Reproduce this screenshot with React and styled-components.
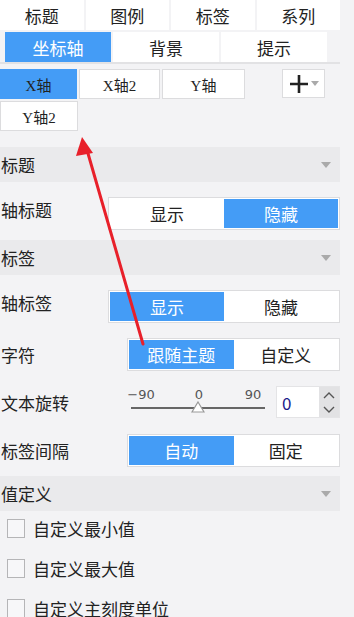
import React from 'react'
import styled, { createGlobalStyle } from 'styled-components'

const GlobalStyle = createGlobalStyle`
  html, body {
    margin: 0;
    padding: 0;
    background: #f3f3f5;
  }
  body {
    font-family: "Noto Sans CJK SC", "Noto Sans", sans-serif;
    color: #222;
  }
`

const BLUE = '#449cf6'

const Page = styled.div`
  position: relative;
  width: 354px;
  height: 617px;
  overflow: hidden;
  background: #f3f3f5;
`

const Panel = styled.div`
  width: 340px;
  display: flex;
  flex-direction: column;
`

const TabRow = styled.div`
  display: grid;
  grid-template-columns: repeat(4, 1fr);
  gap: 2px;
  height: 30px;
`

const SubTabRow = styled.div`
  display: grid;
  grid-template-columns: 106px 106px 106px;
  gap: 2px;
  height: 30px;
  margin-top: 2px;
  padding-left: 5px;
  border-bottom: 2px solid #e2e2e4;
`

const Tab = styled.div`
  display: flex;
  align-items: center;
  justify-content: center;
  font-size: 17px;
  background: ${p => (p.$active ? BLUE : '#fff')};
  color: ${p => (p.$active ? '#fff' : '#222')};
`

const AxisArea = styled.div`
  display: flex;
  align-items: flex-start;
  margin-top: 5px;
`

const AxisList = styled.div`
  display: flex;
  flex-wrap: wrap;
  width: 250px;
  column-gap: 2px;
  row-gap: 2px;
`

const AxisButton = styled.div`
  box-sizing: border-box;
  width: ${p => p.$w}px;
  height: 30px;
  display: flex;
  align-items: center;
  justify-content: center;
  font-size: 15px;
  font-family: "Liberation Serif", "Noto Sans CJK SC", serif;
  background: ${p => (p.$active ? BLUE : '#fff')};
  border: 1px solid ${p => (p.$active ? BLUE : '#dcdcde')};
  color: #222;
`

const AddButton = styled.div`
  box-sizing: border-box;
  width: 43px;
  height: 29px;
  margin-left: 32px;
  display: flex;
  align-items: center;
  justify-content: center;
  gap: 2px;
  background: #fff;
  border: 1px solid #dcdcde;
`

const SectionHeader = styled.div`
  height: 35px;
  display: flex;
  align-items: center;
  justify-content: space-between;
  padding: 0 9px 0 1px;
  margin-top: ${p => p.$top || 0}px;
  background: #eaeaec;
  font-size: 17px;
`

const Caret = styled.span`
  width: 0;
  height: 0;
  border-left: 5px solid transparent;
  border-right: 5px solid transparent;
  border-top: 6px solid #aaa;
`

const SectionBody = styled.div`
  display: flex;
  flex-direction: column;
  gap: 16px;
  padding: ${p => p.$pad || '15px 0 10px'};
`

const Row = styled.div`
  display: flex;
  align-items: center;
  height: ${p => p.$h || 32}px;
`

const Label = styled.div`
  font-size: 17px;
  padding-left: 1px;
  margin-top: ${p => p.$lift ? -8 : 0}px;
  white-space: nowrap;
`

const Segmented = styled.div`
  box-sizing: border-box;
  margin-left: auto;
  width: ${p => p.$w}px;
  height: 33px;
  display: flex;
  padding: 1px;
  background: #fff;
  border: 1px solid #dcdcde;
`

const Segment = styled.div`
  flex: 1;
  display: flex;
  align-items: center;
  justify-content: center;
  font-size: 17px;
  background: ${p => (p.$active ? BLUE : '#fff')};
  color: ${p => (p.$active ? '#fff' : '#222')};
`

const SliderBox = styled.div`
  position: relative;
  margin-left: auto;
  width: 140px;
  height: 32px;
`

const Scale = styled.div`
  display: flex;
  font-size: 13px;
  color: #555;
  font-family: "DejaVu Sans", "Noto Sans", sans-serif;
  line-height: 14px;
  padding-top: 2px;
`

const Tick = styled.span`
  width: ${p => p.$w}px;
  text-align: ${p => p.$align || 'center'};
`

const Track = styled.div`
  position: absolute;
  left: 4px;
  right: 2px;
  top: 21px;
  height: 1.5px;
  background: #666;
`

const Thumb = styled.svg`
  position: absolute;
  left: 64px;
  top: 15px;
`

const NumberBox = styled.div`
  box-sizing: border-box;
  margin-left: 9px;
  width: 64px;
  height: 32px;
  display: flex;
  background: #fff;
  border: 1px solid #e4e4e6;
`

const NumberValue = styled.div`
  flex: 1;
  display: flex;
  align-items: center;
  padding-left: 5px;
  font-size: 17px;
  color: #1a1a8a;
`

const Stepper = styled.div`
  width: 20px;
  display: flex;
  flex-direction: column;
  align-items: center;
  justify-content: space-around;
  background: #e2e2e4;
`

const CheckList = styled.div`
  display: flex;
  flex-direction: column;
  gap: 21px;
  padding: 8px 0 0 7px;
`

const CheckRow = styled.label`
  display: flex;
  align-items: center;
  gap: 8px;
  height: 19px;
  font-size: 17px;
`

const Box = styled.span`
  box-sizing: border-box;
  width: 18px;
  height: 19px;
  border: 1.5px solid #b5b5b7;
  background: #f7f7f9;
`

const Overlay = styled.svg`
  position: absolute;
  left: 0;
  top: 0;
  pointer-events: none;
`

const Chevron = ({ up }) => (
  <svg width="12" height="8" viewBox="0 0 12 8">
    <path d={up ? 'M1 7 L6 2 L11 7' : 'M1 1 L6 6 L11 1'} fill="none" stroke="#555" strokeWidth="1.4" />
  </svg>
)

const Seg = ({ w, items, active }) => (
  <Segmented $w={w}>
    {items.map((t, i) => (
      <Segment key={t} $active={i === active}>{t}</Segment>
    ))}
  </Segmented>
)

const axes = [
  { t: 'X轴', w: 77, active: true },
  { t: 'X轴2', w: 81 },
  { t: 'Y轴', w: 83 },
  { t: 'Y轴2', w: 78 },
]

export default function App() {
  return (
    <Page>
      <GlobalStyle />
      <Panel>
        <TabRow>
          {['标题', '图例', '标签', '系列'].map(t => <Tab key={t}>{t}</Tab>)}
        </TabRow>
        <SubTabRow>
          <Tab $active>坐标轴</Tab>
          <Tab>背景</Tab>
          <Tab>提示</Tab>
        </SubTabRow>

        <AxisArea>
          <AxisList>
            {axes.map(a => (
              <AxisButton key={a.t} $w={a.w} $active={a.active}>{a.t}</AxisButton>
            ))}
          </AxisList>
          <AddButton>
            <svg width="20" height="20" viewBox="0 0 20 20">
              <path d="M10 1 V19 M1 10 H19" stroke="#222" strokeWidth="2.6" />
            </svg>
            <Caret style={{ borderTopWidth: 5, borderLeftWidth: 4, borderRightWidth: 4 }} />
          </AddButton>
        </AxisArea>

        <SectionHeader $top={16}>标题<Caret /></SectionHeader>
        <SectionBody>
          <Row $h={33}>
            <Label $lift>轴标题</Label>
            <Seg w={232} items={['显示', '隐藏']} active={1} />
          </Row>
        </SectionBody>

        <SectionHeader>标签<Caret /></SectionHeader>
        <SectionBody>
          <Row>
            <Label $lift>轴标签</Label>
            <Seg w={232} items={['显示', '隐藏']} active={0} />
          </Row>
          <Row>
            <Label>字符</Label>
            <Seg w={213} items={['跟随主题', '自定义']} active={0} />
          </Row>
          <Row>
            <Label>文本旋转</Label>
            <SliderBox>
              <Scale>
                <Tick $w={28}>−90</Tick>
                <Tick $w={88}>0</Tick>
                <Tick $w={20}>90</Tick>
              </Scale>
              <Track />
              <Thumb width="14" height="12" viewBox="0 0 14 12">
                <path d="M7 1 L13 11 L1 11 Z" fill="#fff" stroke="#999" strokeWidth="1.2" />
              </Thumb>
            </SliderBox>
            <NumberBox>
              <NumberValue>0</NumberValue>
              <Stepper>
                <Chevron up />
                <Chevron />
              </Stepper>
            </NumberBox>
          </Row>
          <Row>
            <Label>标签间隔</Label>
            <Seg w={213} items={['自动', '固定']} active={0} />
          </Row>
        </SectionBody>

        <SectionHeader>值定义<Caret /></SectionHeader>
        <CheckList>
          <CheckRow><Box />自定义最小值</CheckRow>
          <CheckRow><Box />自定义最大值</CheckRow>
          <CheckRow><Box />自定义主刻度单位</CheckRow>
        </CheckList>
      </Panel>

      <Overlay width="354" height="617" viewBox="0 0 354 617">
        <line x1="143" y1="344" x2="87" y2="150" stroke="#e8202a" strokeWidth="3" strokeLinecap="round" />
        <path d="M82 137 L93 153 L76 156 Z" fill="#e8202a" />
      </Overlay>
    </Page>
  )
}
